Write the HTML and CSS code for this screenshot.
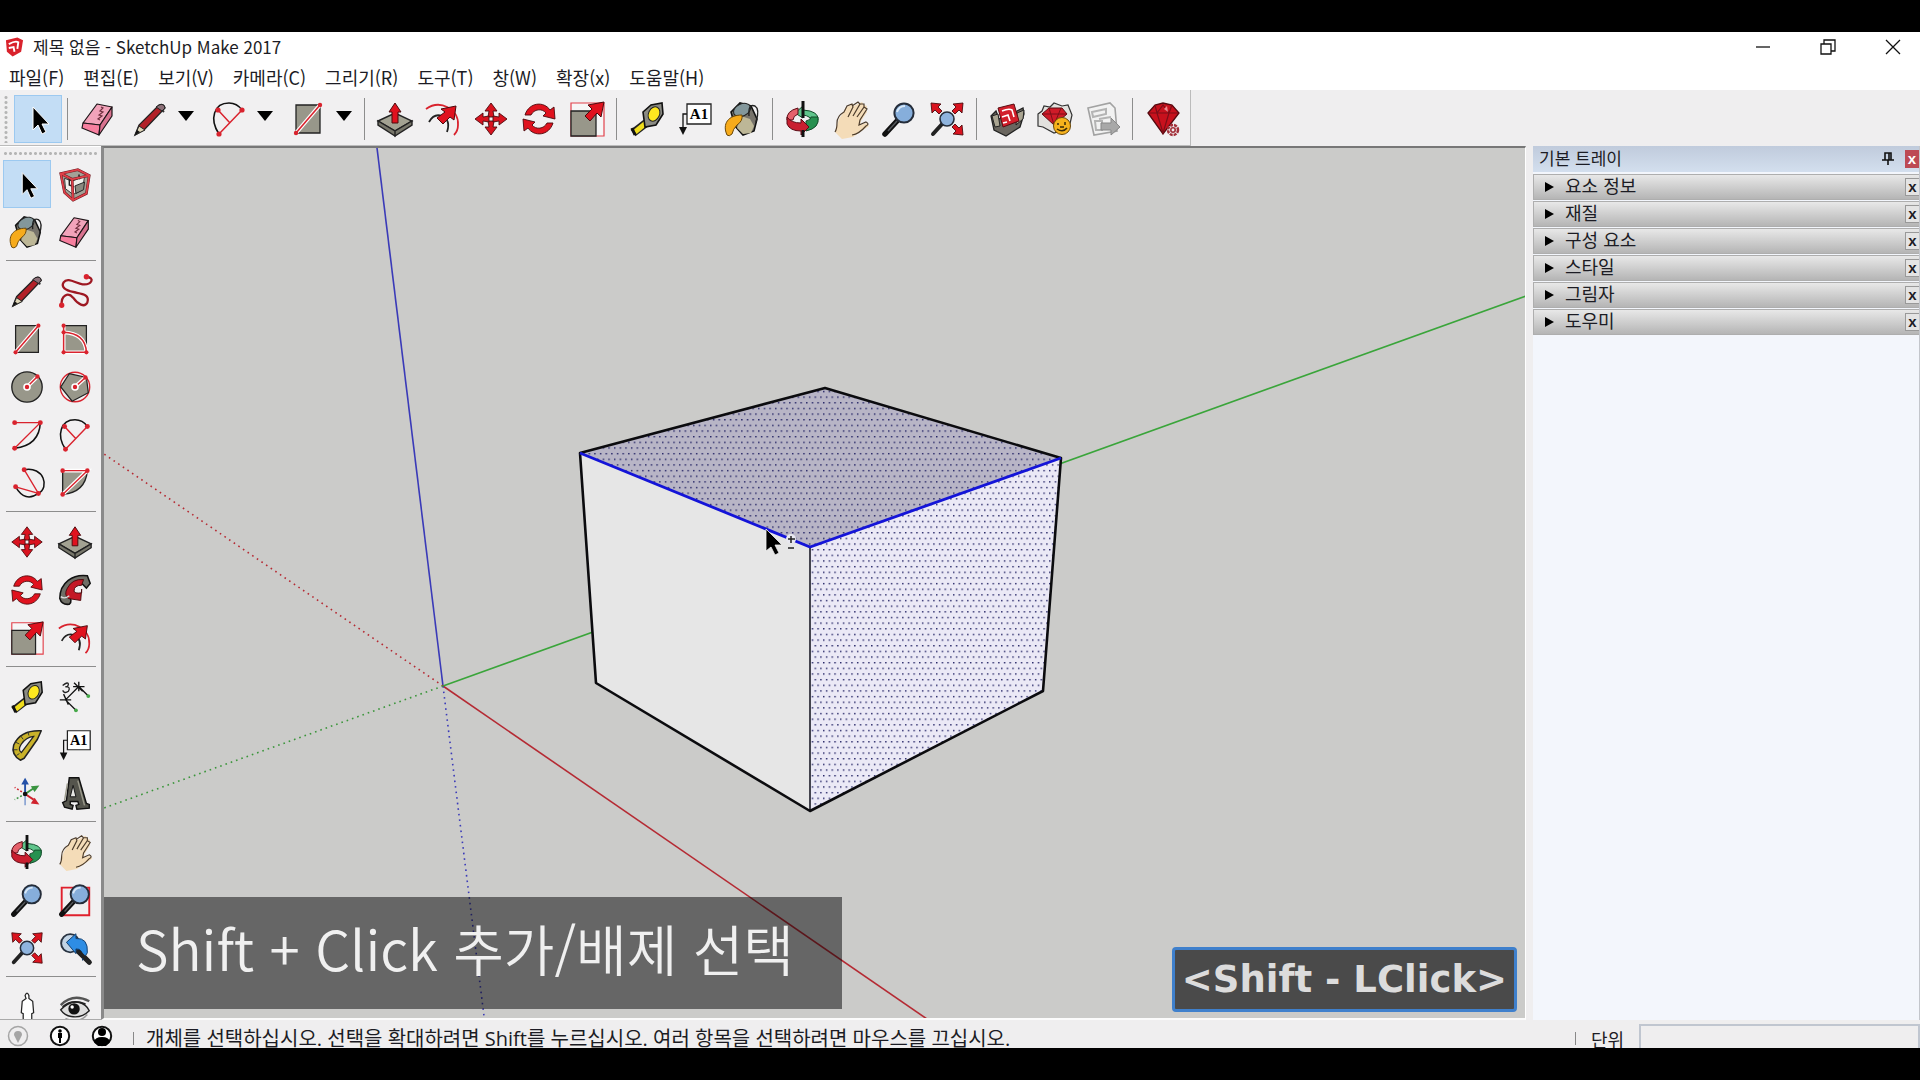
FILE: index.html
```html
<!DOCTYPE html>
<html lang="ko">
<head>
    <meta charset="UTF-8">
    <meta name="viewport" content="width=device-width, initial-scale=1.0">
    <title>제목 없음 - SketchUp Make 2017</title>
    <link rel="stylesheet" href="styles.css">
</head>
<body>
    <!-- Icon set -->
    <svg class="icon-defs" aria-hidden="true">
        <symbol id="i-select" viewBox="0 0 40 40">
            <path d="M15 8v23l5-5 4 9 4-2-4-8h7z" fill="#000" stroke="#fff" stroke-width="1"/>
        </symbol>
        <symbol id="i-eraser" viewBox="0 0 40 40">
            <g stroke="#1d1518" stroke-width="1.2" stroke-linejoin="round">
                <path d="M19 5l15 3-12 18L5 24z" fill="#f2a3ba"/>
                <path d="M5 24l17 2-1 10L4 29z" fill="#f77f9f"/>
                <path d="M34 8v9L21 36l1-10z" fill="#d9728f"/>
            </g>
            <path d="M23 8l2 1-3 3 3 1-4 3 3 1-4 3 2 1" fill="none" stroke="#70303f" stroke-width="1.2"/>
        </symbol>
        <symbol id="i-pencil" viewBox="0 0 40 40">
            <path d="M5 36l4-10L29 6q5-2 6 3L14 31z" fill="#b22028" stroke="#222" stroke-width="1.3"/>
            <path d="M28 7l6 6" stroke="#333" stroke-width="2"/>
            <path d="M29 6q5-2 6 3l-3 3-6-4z" fill="#8c7078" stroke="#222"/>
            <path d="M5 36l4-9 6 4z" fill="#dfd6b8" stroke="#222"/>
            <path d="M5 36l2-5 3 2z" fill="#111"/>
        </symbol>
        <symbol id="i-arc2" viewBox="0 0 40 40">
            <path d="M10 35C0 20 5 4 20 4q8 0 13 7" fill="none" stroke="#111" stroke-width="1.6"/>
            <path d="M10 35l23-24M9 11l12 13" fill="none" stroke="#d9232e" stroke-width="1.5"/>
            <g fill="#d9232e"><circle cx="10" cy="35" r="2.6"/><circle cx="33" cy="11" r="2.6"/><circle cx="9" cy="11" r="2.6"/></g>
        </symbol>
        <symbol id="i-rect" viewBox="0 0 40 40">
            <path d="M8 6h24v28H8z" fill="#98978a" stroke="#222" stroke-width="1.3"/>
            <path d="M8 34L32 6" stroke="#fff" stroke-width="4"/>
            <path d="M8 34L32 6" stroke="#d9232e" stroke-width="1.6"/>
            <g fill="#d9232e"><circle cx="8" cy="34" r="2.2"/><circle cx="32" cy="6" r="2.2"/></g>
        </symbol>
        <symbol id="i-pushpull" viewBox="0 0 40 40">
            <path d="M3 22l17-8 17 8-17 10z" fill="#a3a292" stroke="#222" stroke-width="1.4"/>
            <path d="M3 22v4l17 11V32zM37 22v4L20 37v-5z" fill="#77766a" stroke="#222" stroke-width="1.4"/>
            <path d="M20 4l6 9h-3v11h-6V13h-3z" fill="#e0121e" stroke="#4b0a0d" stroke-width="1"/>
        </symbol>
        <symbol id="i-offset" viewBox="0 0 40 40">
            <path d="M3 10C17 0 36 10 35 26q0 6-4 10" fill="none" stroke="#d9232e" stroke-width="1.8"/>
            <path d="M6 23q5-9 13-6 9 4 5 16" fill="none" stroke="#222" stroke-width="1.8"/>
            <path d="M33 7l-2 14-4-3-7 7-6-6 8-6-4-3z" fill="#e0121e" stroke="#4b0a0d"/>
        </symbol>
        <symbol id="i-move" viewBox="0 0 40 40">
            <g fill="#d9131f" stroke="#4b0a0d" stroke-width=".9">
                <path d="M20 4l6 8h-4l1 6h-6l1-6h-4z"/>
                <path d="M20 36l6-8h-4l1-6h-6l1 6h-4z"/>
                <path d="M4 20l8-6v4l6-1v6l-6-1v4z"/>
                <path d="M36 20l-8-6v4l-6-1v6l6-1v4z"/>
            </g>
        </symbol>
        <symbol id="i-rotate" viewBox="0 0 40 40">
            <g fill="#e0121e" stroke="#4b0a0d" stroke-width=".9">
                <path d="M6 16C10 3 25 2 31 11l4-3 1 12-12-3 3-3C23 9 15 10 12 16z"/>
                <path d="M34 24C30 37 15 38 9 29l-4 3-1-12 12 3-3 3c4 5 12 4 15-2z"/>
            </g>
        </symbol>
        <symbol id="i-scale" viewBox="0 0 40 40">
            <path d="M4 4h33v33H4z" fill="#fff" fill-opacity=".4" stroke="#e2414b" stroke-width="1.2"/>
            <path d="M4 12h25v25H4z" fill="#98978a" stroke="#222" stroke-width="1.3"/>
            <path d="M37 3l-3 15-4-4-7 8-5-5 7-7-4-4z" fill="#e0121e" stroke="#4b0a0d"/>
        </symbol>
        <symbol id="i-tape" viewBox="0 0 40 40">
            <path d="M19 24L6 34" stroke="#222" stroke-width="8"/>
            <path d="M19 24L8 33" stroke="#f0dd1c" stroke-width="5"/>
            <path d="M5 29l3 7" stroke="#111" stroke-width="3"/>
            <path d="M16 13l8-7 11-2 1 11-7 11-11 2z" fill="#8b8b84" stroke="#111" stroke-width="1.6"/>
            <ellipse cx="27" cy="15" rx="5.5" ry="7.5" transform="rotate(25 27 15)" fill="#ffe81f" stroke="#222"/>
        </symbol>
        <symbol id="i-text" viewBox="0 0 40 40">
            <path d="M12 15H8v15" fill="none" stroke="#111" stroke-width="1.3"/>
            <path d="M4 28h8l-4 8z" fill="#111"/>
            <path d="M12 5h24v20H12z" fill="#fff" stroke="#222" stroke-width="1.3"/>
            <text x="24" y="20" class="icon-label">A1</text>
        </symbol>
        <symbol id="i-paint" viewBox="0 0 40 40">
            <path d="M8 13L17 4l11 3 6 13-3 12-11 4-8-9z" fill="#77736b" stroke="#111" stroke-width="1.6"/>
            <path d="M18 17l9 3 4 7-3 7-8 1-6-6z" fill="#bdb797"/>
            <ellipse cx="19" cy="11" rx="9" ry="6" transform="rotate(-25 19 11)" fill="#83979b" stroke="#222"/>
            <path d="M26 17q-1-13 6-10 5 3 1 16" fill="none" stroke="#222" stroke-width="1.4"/>
            <path d="M4 36C-1 25 5 16 19 16q1 6-5 10-4 4-5 9-3 3-5 1z" fill="#f7ab1b" stroke="#6a4708" stroke-width="1"/>
        </symbol>
        <symbol id="i-orbit" viewBox="0 0 40 40">
            <path d="M35 21q1-9-15-10v-4l-8 7 8 5v-3q8 1 8 6z" fill="#5fc48b" stroke="#134a29"/>
            <path d="M35 18q2 11-12 14v-10q5-1 5-4z" fill="#279150" stroke="#134a29"/>
            <path d="M4 21q-1-9 11-12v6q-5 2-5 6z" fill="#e5616b" stroke="#5b0b14"/>
            <path d="M4 18v7q3 7 14 7v4l8-8-8-8v4Q8 24 4 18z" fill="#c91f30" stroke="#5b0b14"/>
            <path d="M20 2v17M20 31v7" stroke="#111" stroke-width="3"/>
        </symbol>
        <symbol id="i-pan" viewBox="0 0 40 40">
            <path d="M4 33l4-13 8-12 6-3 1 2 8-4 2 3 3 1-1 4 1 2-6 9-1 4 7-2 2 3-9 6-7 5-11 2z" fill="#f4dcb8"/>
            <path d="M4 33q2-3 2-9 0-7 7-11l3-6 5-2 1 3-5 10M21 7l6-4 2 2-7 12M29 5l4 0 0 3-7 10M33 8l3 2-7 11-1 5 7-3q4 2 0 4-7 8-14 9" fill="none" stroke="#4c3c2c" stroke-width="1.2"/>
        </symbol>
        <symbol id="i-zoom" viewBox="0 0 40 40">
            <path d="M6 35l12-13" stroke="#111" stroke-width="5.5" stroke-linecap="round"/>
            <path d="M9 32l9-10" stroke="#55585c" stroke-width="1.5"/>
            <circle cx="25" cy="14" r="9.6" fill="#86aedb" stroke="#252d3a" stroke-width="2"/>
            <path d="M18 13q2-6 8-6" fill="none" stroke="#d8e8f7" stroke-width="2"/>
        </symbol>
        <symbol id="i-zoomwin" viewBox="0 0 40 40">
            <path d="M6 7h29v29H6z" fill="none" stroke="#e0202d" stroke-width="2"/>
            <use href="#i-zoom"/>
        </symbol>
        <symbol id="i-extents" viewBox="0 0 40 40">
            <g fill="#d9131f" stroke="#4b0a0d" stroke-width=".9">
                <path d="M4 4l10 1-3 3 4 4-3 3-4-4-3 3z"/>
                <path d="M36 4L26 5l3 3-4 4 3 3 4-4 3 3z"/>
                <path d="M36 36l-10-1 3-3-4-4 3-3 4 4 3-3z"/>
            </g>
            <path d="M6 35l10-11" stroke="#222" stroke-width="4" stroke-linecap="round"/>
            <circle cx="20" cy="20" r="7" fill="#8fb4de" stroke="#252d3a" stroke-width="1.6"/>
        </symbol>
        <symbol id="i-prev" viewBox="0 0 40 40">
            <path d="M23 23l12 12" stroke="#222" stroke-width="5.5" stroke-linecap="round"/>
            <circle cx="15" cy="15" r="9.6" fill="#c3d5e6" stroke="#2a3442" stroke-width="2"/>
            <path d="M11 14L21 5v5q13-1 12 15l-5 8q1-13-7-12v5z" fill="#2e8de4" stroke="#123d6c"/>
            <path d="M24 24l11 11" stroke="#222" stroke-width="4" stroke-linecap="round"/>
        </symbol>
        <symbol id="i-component" viewBox="0 0 40 40">
            <path d="M5 9l18-4 12 6-3 19-14 7-9-8z" fill="#a3a197"/>
            <path d="M9 14l8 3 13-5-2 14-10 5-8-6z" fill="#f0f0ec" stroke="#333"/>
            <path d="M20 22l10-4-1 8-8 4z" fill="#8b8a80" stroke="#222"/>
            <path d="M14 14v7l5 2M24 10l1 5" fill="none" stroke="#222" stroke-width="1.5"/>
            <path d="M5 9l18-4 12 6-3 19-14 7-9-8zM5 9l12 6 18-4M17 15l1 22" fill="none" stroke="#6a1a20" stroke-width="2.8"/>
            <path d="M5 9l18-4 12 6-3 19-14 7-9-8zM5 9l12 6 18-4M17 15l1 22" fill="none" stroke="#e04049" stroke-width="1.8"/>
        </symbol>
        <symbol id="i-freehand" viewBox="0 0 40 40">
            <path d="M6 35C5 24 13 21 18 27c5 7 12 11 15 5 3-9-7-9-15-11S5 16 8 11c4-6 13 1 20 2 9 1 14-7 4-8" fill="none" stroke="#9e1822" stroke-width="2.4"/>
            <g fill="#d9232e"><circle cx="6" cy="35" r="2.8"/><circle cx="32" cy="5" r="2.8"/></g>
        </symbol>
        <symbol id="i-rotrect" viewBox="0 0 40 40">
            <path d="M8 6h24v28H8z" fill="#98978a" stroke="#222" stroke-width="1.3"/>
            <path d="M8 6v28h24Q31 14 8 13" fill="none" stroke="#fff" stroke-width="4"/>
            <path d="M8 6v28h24Q31 14 8 13" fill="none" stroke="#d9232e" stroke-width="1.6"/>
            <g fill="#d9232e"><circle cx="8" cy="6" r="2.2"/><circle cx="8" cy="13" r="2.2"/><circle cx="8" cy="34" r="2.2"/><circle cx="32" cy="34" r="2.2"/></g>
        </symbol>
        <symbol id="i-circle" viewBox="0 0 40 40">
            <circle cx="20" cy="20" r="16" fill="#98978a" stroke="#222" stroke-width="1.4"/>
            <path d="M20 20L31 9" stroke="#fff" stroke-width="4"/>
            <path d="M20 20L31 9" stroke="#d9232e" stroke-width="1.6"/>
            <circle cx="20" cy="20" r="4" fill="#fff"/>
            <g fill="#d9232e"><circle cx="20" cy="20" r="2.3"/><circle cx="31" cy="9" r="2.3"/></g>
        </symbol>
        <symbol id="i-polygon" viewBox="0 0 40 40">
            <circle cx="20" cy="20" r="15.5" fill="none" stroke="#d9232e" stroke-width="1.4"/>
            <path d="M14 6l18 4 2 16-17 9L5 20z" fill="#98978a" stroke="#222" stroke-width="1.3"/>
            <path d="M20 20L31 10" stroke="#fff" stroke-width="4"/>
            <path d="M20 20L31 10" stroke="#d9232e" stroke-width="1.6"/>
            <circle cx="20" cy="20" r="4" fill="#fff"/>
            <g fill="#d9232e"><circle cx="20" cy="20" r="2.3"/><circle cx="31" cy="10" r="2.3"/></g>
        </symbol>
        <symbol id="i-arc" viewBox="0 0 40 40">
            <path d="M34 7Q33 31 7 34" fill="none" stroke="#111" stroke-width="1.6"/>
            <path d="M7 7h27L7 34" fill="none" stroke="#d9232e" stroke-width="1.4"/>
            <g fill="#d9232e"><circle cx="7" cy="7" r="2.6"/><circle cx="34" cy="7" r="2.6"/><circle cx="7" cy="34" r="2.6"/></g>
        </symbol>
        <symbol id="i-arc3" viewBox="0 0 40 40">
            <path d="M17 6C38 2 44 25 32 31Q18 41 8 24" fill="none" stroke="#111" stroke-width="1.6"/>
            <path d="M17 6l15 25-24-7" fill="none" stroke="#d9232e" stroke-width="1.4"/>
            <g fill="#d9232e"><circle cx="17" cy="6" r="2.6"/><circle cx="32" cy="31" r="2.6"/><circle cx="8" cy="24" r="2.6"/></g>
        </symbol>
        <symbol id="i-pie" viewBox="0 0 40 40">
            <path d="M7 7h26Q31 30 7 32z" fill="#98978a" stroke="#222" stroke-width="1.4"/>
            <path d="M7 32L33 7H7" fill="none" stroke="#fff" stroke-width="4"/>
            <path d="M7 32L33 7H7" fill="none" stroke="#d9232e" stroke-width="1.5"/>
            <g fill="#d9232e"><circle cx="7" cy="7" r="2.4"/><circle cx="33" cy="7" r="2.4"/><circle cx="7" cy="32" r="2.4"/></g>
        </symbol>
        <symbol id="i-follow" viewBox="0 0 40 40">
            <path d="M4 29C4 12 18 3 33 5l3 8-4 5-4-4q-15-2-15 12 5 5 1 9-8 1-10-6z" fill="#6f6e66" stroke="#111" stroke-width="1.6"/>
            <path d="M12 18Q17 8 29 9l-2 6q-8 0-8 6 0 3 8 2v-4l-1 12-13-2q-5-4-1-11z" fill="#c41826" stroke="#4b0a0d"/>
            <path d="M5 27q4 3 9-1" fill="none" stroke="#ddd" stroke-width="1.5"/>
        </symbol>
        <symbol id="i-dimension" viewBox="0 0 40 40">
            <path d="M10 23L24 9l10 10M10 23l11 11M8 17l5 11M4 23h12M19 5l9 9M18 9h12M24 4v10" fill="none" stroke="#111" stroke-width="1.4"/>
            <path d="M7 8q6-5 6-1-1 3-3 2 6 0 3 5-4 3-6-1" fill="none" stroke="#222" stroke-width="1.4"/>
            <g fill="#45a849"><circle cx="34" cy="19" r="2"/><circle cx="21" cy="34" r="2"/></g>
        </symbol>
        <symbol id="i-protractor" viewBox="0 0 40 40">
            <path d="M35 5l-4 9-14 20-4 2Q3 30 6 20 13 4 35 5z" fill="#c9b22a" stroke="#222" stroke-width="1.6" stroke-linejoin="round"/>
            <path d="M27 11L14 28q-4-3 0-9 5-7 13-8z" fill="#f1f0f1" stroke="#222" stroke-width="1.3"/>
            <path d="M8 17l4 2M6 25l4 0M13 10l3 4M21 6l1 4M9 31l3-2" stroke="#333"/>
        </symbol>
        <symbol id="i-axes" viewBox="0 0 40 40">
            <path d="M18 21V10" stroke="#2350a8" stroke-width="2"/><path d="M18 4l4 7h-8z" fill="#2350a8"/>
            <path d="M18 21l9-6" stroke="#3a9440" stroke-width="2"/><path d="M33 12l-5 7-4-6z" fill="#3a9440"/>
            <path d="M18 21l9 6" stroke="#d0222d" stroke-width="2"/><path d="M33 32l-9-1 4-6z" fill="#d0222d"/>
            <path d="M18 21L7 14" stroke="#d0222d" stroke-width="1.6" stroke-dasharray="2 2"/>
            <path d="M18 21L7 27" stroke="#3a9440" stroke-width="1.6" stroke-dasharray="2 2"/>
            <path d="M18 21v12" stroke="#7f9bd0" stroke-width="1.6"/>
            <circle cx="18" cy="21" r="2.4" fill="#111"/>
        </symbol>
        <symbol id="i-3dtext" viewBox="0 0 40 40">
            <path d="M14 4h10l8 27 3 1v4l-13 1-1-4 3-1-1-3h-8v3l3 1-1 4-8-2-2-5 4-2z" fill="#55554d" stroke="#111" stroke-width="1.5"/>
            <path d="M18 12l3 12h-6z" fill="#e8e8e4" stroke="#111"/>
            <path d="M23 7l7 26M12 10L9 28" stroke="#9b9a8c" stroke-width="1.5"/>
        </symbol>
        <symbol id="i-person" viewBox="0 0 40 40">
            <path d="M18 8q2-5 4 0v3l4 3 1 12-2 1v9h-9v-9l-2-1 1-12 4-3z" fill="#fff" stroke="#222" stroke-width="1.3"/>
            <path d="M15 36h4M21 36h5" stroke="#a33" stroke-width="2"/>
        </symbol>
        <symbol id="i-eye" viewBox="0 0 40 40">
            <path d="M5 23Q14 13 24 15q8 2 11 9-8 8-19 6-7-1-11-7z" fill="#dedede" stroke="#222" stroke-width="1.5"/>
            <path d="M5 18Q18 5 35 14" fill="none" stroke="#555" stroke-width="2.5"/>
            <path d="M7 20q10-9 24-3" fill="none" stroke="#222" stroke-width="2"/>
            <circle cx="19" cy="22" r="6" fill="#111"/><circle cx="17" cy="20" r="1.8" fill="#fff"/>
            <path d="M10 32q14 6 23-4" fill="none" stroke="#999" stroke-width="1.5"/>
        </symbol>
        <symbol id="i-warehouse" viewBox="0 0 40 40">
            <path d="M4 17l5-5 3 8 18-8 6-3 1 6-4 13-14 9-12-6z" fill="#6a665f" stroke="#222" stroke-width="1.3"/>
            <path d="M5 17l6-2 2 12-5 1zM30 14l7-3-1 9-7 6z" fill="#aaa592" stroke="#222"/>
            <path d="M11 9l16-4 5 17-16 6z" fill="#d21f2b" stroke="#5a0c12"/>
            <path d="M15 12q7-3 10-1l2 7M15 18l6-2 2 6M16 24l4-1" fill="none" stroke="#fff" stroke-width="1.6"/>
        </symbol>
        <symbol id="i-extwarehouse" viewBox="0 0 40 40">
            <path d="M3 15l4-3 2-5 6 1 4-4 8 3 6-1 4 10-3 13-15 5-11-6-5-1z" fill="#e2e1de" stroke="#333" stroke-width="1.2"/>
            <path d="M7 15l7-6h13l5 6-13 11z" fill="#cf1b28" stroke="#5a0c12"/>
            <path d="M7 15h25M14 9l5 17 7-17" fill="none" stroke="#7d0f18"/>
            <circle cx="27" cy="27" r="8.5" fill="#f6b21c" stroke="#6a4708"/>
            <path d="M23 24v2M30 23v3M22 30q6 4 10-1M25 28h4" fill="none" stroke="#3a2a08" stroke-width="1.5"/>
        </symbol>
        <symbol id="i-layout" viewBox="0 0 40 40">
            <path d="M5 9l22-5 5 5 2 23-23 4z" fill="#f2f2f2" stroke="#a2a2a2" stroke-width="1.6"/>
            <path d="M9 13l14-3v5l-13 3zM12 22h7v9h-6zM16 20l12-2" fill="none" stroke="#b4b4b4" stroke-width="2"/>
            <path d="M18 24h10v-5l9 9-9 8v-5H18z" fill="#a8a8a8" stroke="#888"/>
        </symbol>
        <symbol id="i-extmanager" viewBox="0 0 40 40">
            <path d="M5 14l7-8 8-2 9 2 7 8-16 21z" fill="#c8111d" stroke="#540a10" stroke-width="1.3"/>
            <path d="M6 14h29M12 6l2 8 6-8 6 8 3-8M14 14l6 20 6-20" fill="none" stroke="#7d0f18" stroke-width="1.2"/>
            <path d="M21 10l3-3 1 6z" fill="#ef8a90"/>
            <circle cx="30" cy="31" r="5" fill="#f1f0f1" stroke="#a3303a" stroke-width="2.5" stroke-dasharray="3 1"/>
            <circle cx="30" cy="31" r="2.2" fill="none" stroke="#a3303a" stroke-width="1.6"/>
        </symbol>
    </svg>

    <div class="app">
        <header class="titlebar">
            <svg class="logo" viewBox="0 0 20 20" aria-hidden="true">
                <path d="M1 3l12-3 6 3-2 12-9 5-6-5z" fill="#d9222c"/>
                <path d="M4 7q7-4 10-2l-1 7M4 11l5-1 1 5" fill="none" stroke="#fff" stroke-width="2"/>
            </svg>
            <h1>제목 없음 - SketchUp Make 2017</h1>
            <div class="window-buttons">
                <button type="button" aria-label="최소화"><svg viewBox="0 0 16 16"><path d="M1 8h14"/></svg></button>
                <button type="button" aria-label="이전 크기로"><svg viewBox="0 0 16 16"><path d="M1 5h10v10H1zM4 5V1h11v11h-4"/></svg></button>
                <button type="button" aria-label="닫기"><svg viewBox="0 0 16 16"><path d="M1 1l14 14M15 1L1 15"/></svg></button>
            </div>
        </header>

        <nav class="menubar">
            <button type="button">파일(F)</button>
            <button type="button">편집(E)</button>
            <button type="button">보기(V)</button>
            <button type="button">카메라(C)</button>
            <button type="button">그리기(R)</button>
            <button type="button">도구(T)</button>
            <button type="button">창(W)</button>
            <button type="button">확장(x)</button>
            <button type="button">도움말(H)</button>
        </nav>

        <div class="toolbar-row">
            <div class="toolbar">
                <span class="grip"></span>
                <button type="button" class="tool active" aria-label="선택"><svg><use href="#i-select"/></svg></button>
                <span class="sep"></span>
                <button type="button" class="tool" aria-label="지우개"><svg><use href="#i-eraser"/></svg></button>
                <button type="button" class="tool split" aria-label="선"><svg><use href="#i-pencil"/></svg><span class="caret"></span></button>
                <button type="button" class="tool split" aria-label="호"><svg><use href="#i-arc2"/></svg><span class="caret"></span></button>
                <button type="button" class="tool split" aria-label="직사각형"><svg><use href="#i-rect"/></svg><span class="caret"></span></button>
                <span class="sep"></span>
                <button type="button" class="tool" aria-label="밀기/끌기"><svg><use href="#i-pushpull"/></svg></button>
                <button type="button" class="tool" aria-label="오프셋"><svg><use href="#i-offset"/></svg></button>
                <button type="button" class="tool" aria-label="이동"><svg><use href="#i-move"/></svg></button>
                <button type="button" class="tool" aria-label="회전"><svg><use href="#i-rotate"/></svg></button>
                <button type="button" class="tool" aria-label="배율"><svg><use href="#i-scale"/></svg></button>
                <span class="sep"></span>
                <button type="button" class="tool" aria-label="줄자"><svg><use href="#i-tape"/></svg></button>
                <button type="button" class="tool" aria-label="텍스트"><svg><use href="#i-text"/></svg></button>
                <button type="button" class="tool" aria-label="페인트통"><svg><use href="#i-paint"/></svg></button>
                <span class="sep"></span>
                <button type="button" class="tool" aria-label="궤도"><svg><use href="#i-orbit"/></svg></button>
                <button type="button" class="tool" aria-label="이동 보기"><svg><use href="#i-pan"/></svg></button>
                <button type="button" class="tool" aria-label="확대/축소"><svg><use href="#i-zoom"/></svg></button>
                <button type="button" class="tool" aria-label="범위 확대"><svg><use href="#i-extents"/></svg></button>
                <span class="sep"></span>
                <button type="button" class="tool" aria-label="3D Warehouse"><svg><use href="#i-warehouse"/></svg></button>
                <button type="button" class="tool" aria-label="Extension Warehouse"><svg><use href="#i-extwarehouse"/></svg></button>
                <button type="button" class="tool" aria-label="LayOut"><svg><use href="#i-layout"/></svg></button>
                <span class="sep"></span>
                <button type="button" class="tool" aria-label="확장 관리자"><svg><use href="#i-extmanager"/></svg></button>
            </div>
        </div>

        <main class="workspace">
            <aside class="palette">
                <span class="grip"></span>
                <div class="tool-group">
                    <button type="button" class="tool active" aria-label="선택"><svg><use href="#i-select"/></svg></button>
                    <button type="button" class="tool" aria-label="구성 요소 만들기"><svg><use href="#i-component"/></svg></button>
                    <button type="button" class="tool" aria-label="페인트통"><svg><use href="#i-paint"/></svg></button>
                    <button type="button" class="tool" aria-label="지우개"><svg><use href="#i-eraser"/></svg></button>
                </div>
                <div class="tool-group">
                    <button type="button" class="tool" aria-label="선"><svg><use href="#i-pencil"/></svg></button>
                    <button type="button" class="tool" aria-label="자유형"><svg><use href="#i-freehand"/></svg></button>
                    <button type="button" class="tool" aria-label="직사각형"><svg><use href="#i-rect"/></svg></button>
                    <button type="button" class="tool" aria-label="회전된 직사각형"><svg><use href="#i-rotrect"/></svg></button>
                    <button type="button" class="tool" aria-label="원"><svg><use href="#i-circle"/></svg></button>
                    <button type="button" class="tool" aria-label="다각형"><svg><use href="#i-polygon"/></svg></button>
                    <button type="button" class="tool" aria-label="호"><svg><use href="#i-arc"/></svg></button>
                    <button type="button" class="tool" aria-label="2점 호"><svg><use href="#i-arc2"/></svg></button>
                    <button type="button" class="tool" aria-label="3점 호"><svg><use href="#i-arc3"/></svg></button>
                    <button type="button" class="tool" aria-label="파이"><svg><use href="#i-pie"/></svg></button>
                </div>
                <div class="tool-group">
                    <button type="button" class="tool" aria-label="이동"><svg><use href="#i-move"/></svg></button>
                    <button type="button" class="tool" aria-label="밀기/끌기"><svg><use href="#i-pushpull"/></svg></button>
                    <button type="button" class="tool" aria-label="회전"><svg><use href="#i-rotate"/></svg></button>
                    <button type="button" class="tool" aria-label="따라가기"><svg><use href="#i-follow"/></svg></button>
                    <button type="button" class="tool" aria-label="배율"><svg><use href="#i-scale"/></svg></button>
                    <button type="button" class="tool" aria-label="오프셋"><svg><use href="#i-offset"/></svg></button>
                </div>
                <div class="tool-group">
                    <button type="button" class="tool" aria-label="줄자"><svg><use href="#i-tape"/></svg></button>
                    <button type="button" class="tool" aria-label="치수"><svg><use href="#i-dimension"/></svg></button>
                    <button type="button" class="tool" aria-label="각도기"><svg><use href="#i-protractor"/></svg></button>
                    <button type="button" class="tool" aria-label="텍스트"><svg><use href="#i-text"/></svg></button>
                    <button type="button" class="tool" aria-label="축"><svg><use href="#i-axes"/></svg></button>
                    <button type="button" class="tool" aria-label="3D 텍스트"><svg><use href="#i-3dtext"/></svg></button>
                </div>
                <div class="tool-group">
                    <button type="button" class="tool" aria-label="궤도"><svg><use href="#i-orbit"/></svg></button>
                    <button type="button" class="tool" aria-label="이동 보기"><svg><use href="#i-pan"/></svg></button>
                    <button type="button" class="tool" aria-label="확대/축소"><svg><use href="#i-zoom"/></svg></button>
                    <button type="button" class="tool" aria-label="확대/축소 창"><svg><use href="#i-zoomwin"/></svg></button>
                    <button type="button" class="tool" aria-label="범위 확대"><svg><use href="#i-extents"/></svg></button>
                    <button type="button" class="tool" aria-label="이전"><svg><use href="#i-prev"/></svg></button>
                </div>
                <div class="tool-group">
                    <button type="button" class="tool" aria-label="카메라 배치"><svg><use href="#i-person"/></svg></button>
                    <button type="button" class="tool" aria-label="둘러보기"><svg><use href="#i-eye"/></svg></button>
                </div>
            </aside>

            <section class="viewport">
                <svg class="scene" viewBox="104 148 1421 870" preserveAspectRatio="xMidYMid slice" aria-label="모델">
                    <defs>
                        <pattern id="dots" width="5.65" height="11.3" patternUnits="userSpaceOnUse">
                            <path d="M1 1h1.4v1.4H1zM3.8 6.6h1.4V8H3.8z" fill="#1c1c60"/>
                        </pattern>
                    </defs>
                    <!-- axes -->
                    <g fill="none" stroke-width="1.6">
                        <path d="M377 148l66 538" stroke="#3a3ab8"/>
                        <path d="M443 686l484 333" stroke="#b52a33"/>
                        <path d="M443 686L1526 296" stroke="#3aa53a"/>
                        <g stroke-dasharray="1.6 4">
                            <path d="M443 686l41 330" stroke="#3a3ab8"/>
                            <path d="M443 686L104 454" stroke="#b52a33"/>
                            <path d="M443 686L104 808" stroke="#3a953a"/>
                        </g>
                    </g>
                    <!-- cube -->
                    <path d="M580 453l16 230 214 128V547z" fill="#e6e6e6"/>
                    <path d="M580 453l245-65 236 70-251 89z" fill="#b8b5c6"/>
                    <path d="M810 547l251-89-18 233-233 120z" fill="#ebe9f6"/>
                    <path d="M580 453l245-65 236 70-251 89zM810 547l251-89-18 233-233 120z" fill="url(#dots)"/>
                    <path d="M810 547v264" stroke="#44444e" stroke-width="2"/>
                    <path d="M580 453l245-65 236 70-18 233-233 120-214-128z" fill="none" stroke="#0b0b0e" stroke-width="2.6" stroke-linejoin="round"/>
                    <path d="M580 453l230 94 251-89" fill="none" stroke="#1414d8" stroke-width="2.8"/>
                    <!-- cursor -->
                    <path d="M766 529v22l5-4 4 8 4-2-4-8h7z" fill="#000" stroke="#f2f2f2" stroke-width=".8"/>
                    <circle cx="791" cy="539" r="5" fill="#e8e8f0"/>
                    <path d="M788 539h7M791 536v7M788 548h6" stroke="#222" stroke-width="1.5"/>
                </svg>
                <div class="caption">Shift + Click 추가/배제 선택</div>
                <div class="keycast">&lt;Shift - LClick&gt;</div>
            </section>

            <aside class="tray">
                <div class="tray-header">
                    <h2>기본 트레이</h2>
                    <button type="button" class="pin" aria-label="고정"><svg viewBox="0 0 12 14"><path d="M3 1h6v7H3zM7 1v7M0 8h12M6 8v5"/></svg></button>
                    <button type="button" class="tray-close" aria-label="닫기">x</button>
                </div>
                <div class="panel"><button type="button" class="panel-title">요소 정보</button><button type="button" class="panel-close" aria-label="닫기">x</button></div>
                <div class="panel"><button type="button" class="panel-title">재질</button><button type="button" class="panel-close" aria-label="닫기">x</button></div>
                <div class="panel"><button type="button" class="panel-title">구성 요소</button><button type="button" class="panel-close" aria-label="닫기">x</button></div>
                <div class="panel"><button type="button" class="panel-title">스타일</button><button type="button" class="panel-close" aria-label="닫기">x</button></div>
                <div class="panel"><button type="button" class="panel-title">그림자</button><button type="button" class="panel-close" aria-label="닫기">x</button></div>
                <div class="panel"><button type="button" class="panel-title">도우미</button><button type="button" class="panel-close" aria-label="닫기">x</button></div>
            </aside>
        </main>

        <footer class="statusbar">
            <button type="button" class="status-icon" aria-label="위치"><svg viewBox="0 0 22 22"><circle cx="11" cy="11" r="9.5" fill="none" stroke="#a5a5a5" stroke-width="1.5"/><path d="M11 18l-4-8a4 4 0 1 1 8 0z" fill="#a5a5a5"/></svg></button>
            <button type="button" class="status-icon" aria-label="크레딧"><svg viewBox="0 0 22 22"><circle cx="11" cy="11" r="9.2" fill="#fff" stroke="#111" stroke-width="2"/><circle cx="11" cy="6" r="1.8"/><path d="M9 8h4v5h-1v5h-2v-5H9z"/></svg></button>
            <button type="button" class="status-icon" aria-label="로그인"><svg viewBox="0 0 22 22"><circle cx="11" cy="11" r="9.2" fill="#fff" stroke="#111" stroke-width="2"/><circle cx="11" cy="7" r="4"/><path d="M3 17q1-5 8-5t8 5l-4 4H7z"/></svg></button>
            <span class="status-sep"></span>
            <p class="hint">개체를 선택하십시오. 선택을 확대하려면 Shift를 누르십시오. 여러 항목을 선택하려면 마우스를 끄십시오.</p>
            <span class="status-sep"></span>
            <label for="measure">단위</label>
            <input type="text" id="measure">
        </footer>
    </div>
</body>
</html>
```
FILE: styles.css
```css
* {
    box-sizing: border-box;
}

body {
    margin: 0;
    height: 100vh;
    padding: 32px 0;
    background: #000;
    color: #1c1c24;
    font-family: "Noto Sans CJK KR", "Open Sans", sans-serif;
    font-size: 18px;
    overflow: hidden;
}

button {
    margin: 0;
    padding: 0;
    border: 0;
    background: none;
    color: inherit;
    font: inherit;
}

h1, h2, p {
    margin: 0;
    font-size: 17px;
    font-weight: normal;
}

.icon-defs {
    position: absolute;
    width: 0;
    height: 0;
}

.icon-label {
    font-family: "Liberation Serif", serif;
    font-size: 15px;
    font-weight: bold;
    text-anchor: middle;
}

.app {
    display: flex;
    flex-direction: column;
    height: 100%;
    background: #efeeef;
    overflow: hidden;
}

/* Title bar and menu */
.titlebar {
    display: flex;
    align-items: center;
    flex: none;
    height: 32px;
    padding: 0 0 2px 5px;
    background: #fff;
}

.titlebar h1 {
    line-height: 28px;
}

.logo {
    width: 19px;
    height: 20px;
    margin-right: 9px;
}

.window-buttons {
    display: flex;
    gap: 11px;
    margin-left: auto;
}

.window-buttons button {
    width: 54px;
    height: 28px;
}

.window-buttons svg {
    display: block;
    width: 16px;
    height: 16px;
    margin: 0 auto;
    fill: none;
    stroke: #111;
    stroke-width: 1.3;
}

.menubar {
    display: flex;
    flex: none;
    gap: 19px;
    height: 26px;
    padding-left: 9px;
    background: #fff;
}

.menubar button {
    line-height: 25px;
}

/* Tools */
.toolbar-row {
    display: flex;
    flex: none;
    height: 56px;
}

.toolbar {
    display: flex;
    align-items: center;
    padding: 2px 3px 0 0;
    background: #f1f0f1;
    border-right: 1px solid #bbb;
    border-bottom: 1px solid #bbb;
}

.toolbar .grip {
    width: 4px;
    height: 48px;
    margin: 0 6px 0 4px;
    background: radial-gradient(circle, #b5b5b5 1px, transparent 2px) 0 0 / 4px 5px;
}

.tool {
    display: flex;
    align-items: center;
    justify-content: center;
    width: 48px;
    height: 48px;
}

.tool svg {
    width: 40px;
    height: 40px;
}

.palette .tool svg {
    width: 38px;
    height: 38px;
}

.tool.active {
    background: #c3ddf5;
    border: 1px solid #9cc9f0;
}

.tool.split {
    width: 79px;
    gap: 8px;
}

.caret {
    border: 8px solid transparent;
    border-top: 10px solid #000;
    border-bottom: 0;
    margin-bottom: 6px;
}

.toolbar .sep {
    width: 2px;
    height: 42px;
    margin: 0 5px;
    background: linear-gradient(90deg, #8d8d8d 1px, #f1f0f1 1px);
}

.workspace {
    display: flex;
    flex: 1;
    min-height: 0;
}

.palette {
    flex: none;
    width: 101px;
    padding: 0 3px;
    background: #f1f0f1;
    border-top: 1px solid #fff;
    border-bottom: 1px solid #aaa;
    overflow: hidden;
}

.palette .grip {
    display: block;
    height: 5px;
    margin: 4px 0;
    background: radial-gradient(circle, #b5b5b5 1px, transparent 2px) 0 0 / 5px 5px;
}

.tool-group {
    display: flex;
    flex-wrap: wrap;
    width: 96px;
}

.tool-group + .tool-group::before {
    content: "";
    width: 90px;
    height: 1px;
    margin: 4px 3px 6px;
    background: #8d8d8d;
}

/* Drawing area */
.viewport {
    position: relative;
    flex: 1;
    min-width: 0;
    margin-right: 7px;
    background: #cbcbc9;
    border-left: 3px solid #8a8a8a;
    border-top: 2px solid #777;
    border-right: 1px solid #fff;
    border-bottom: 2px solid #fbfbfb;
    overflow: hidden;
}

.scene {
    display: block;
    width: 100%;
    height: 100%;
}

.caption {
    position: absolute;
    left: 0;
    bottom: 9px;
    height: 112px;
    padding: 0 48px 0 32px;
    background: rgba(2, 2, 4, 0.5);
    color: #f0f0f0;
    font-size: 55px;
    font-weight: 350;
    line-height: 100px;
    white-space: nowrap;
}

.keycast {
    position: absolute;
    right: 8px;
    bottom: 6px;
    padding: 0 7px;
    background: #4a4a4a;
    border: 3px solid #3f80cc;
    border-radius: 4px;
    color: #dcdcdc;
    font-family: "DejaVu Sans", sans-serif;
    font-size: 37px;
    font-weight: bold;
    line-height: 59px;
    white-space: nowrap;
}

/* Default tray */
.tray {
    flex: none;
    width: 387px;
    background: #f3f6fc;
    border-right: 1px solid #c3c6cc;
    overflow: hidden;
}

.tray-header {
    display: flex;
    align-items: center;
    height: 26px;
    margin-bottom: 2px;
    padding-left: 6px;
    background: linear-gradient(#c0cbdc, #d3dfee);
}

.tray-header h2 {
    flex: 1;
    padding-bottom: 2px;
    line-height: 24px;
}

.pin svg {
    display: block;
    width: 12px;
    height: 14px;
    margin-right: 11px;
    fill: none;
    stroke: #111;
    stroke-width: 1.6;
}

.tray-close {
    width: 14px;
    height: 18px;
    background: #bd4a54;
    color: #fff;
    font-family: "Liberation Sans", sans-serif;
    font-size: 15px;
    font-weight: bold;
    line-height: 16px;
}

.panel {
    display: flex;
    align-items: center;
    height: 26px;
    margin-bottom: 1px;
    background: linear-gradient(#e8e8e8, #b5b5b5);
    border: 1px solid #aeaeae;
    border-right: 0;
}

.panel-title {
    display: flex;
    align-items: center;
    flex: 1;
    height: 24px;
    padding: 0 0 4px 11px;
    line-height: 20px;
    text-align: left;
}

.panel-title::before {
    content: "";
    margin: 4px 11px 0 0;
    border: 5px solid transparent;
    border-left: 9px solid #000;
    border-right: 0;
}

.panel-close {
    width: 14px;
    height: 18px;
    background: #e4e4e4;
    border: 1px solid #999;
    border-right: 0;
    font-family: "Liberation Sans", sans-serif;
    font-size: 15px;
    font-weight: bold;
    line-height: 16px;
}

/* Status bar */
.statusbar {
    display: flex;
    align-items: flex-start;
    flex: none;
    height: 28px;
    padding: 4px 0 0 7px;
    overflow: hidden;
}

.status-icon {
    flex: none;
    width: 22px;
    height: 24px;
    margin-right: 20px;
}

.status-icon svg {
    display: block;
    width: 22px;
    height: 22px;
}

.status-sep {
    width: 1px;
    height: 13px;
    margin-top: 8px;
    background: #888;
}

.hint {
    flex: 1;
    padding-left: 12px;
    font-family: "Open Sans", "Noto Sans CJK KR", sans-serif;
    font-size: 20px;
    line-height: 30px;
    white-space: nowrap;
}

.statusbar label {
    padding: 0 15px;
    line-height: 30px;
}

#measure {
    width: 281px;
    height: 32px;
    border: 2px solid #c0c6d0;
    background: #efeeef;
}
```
